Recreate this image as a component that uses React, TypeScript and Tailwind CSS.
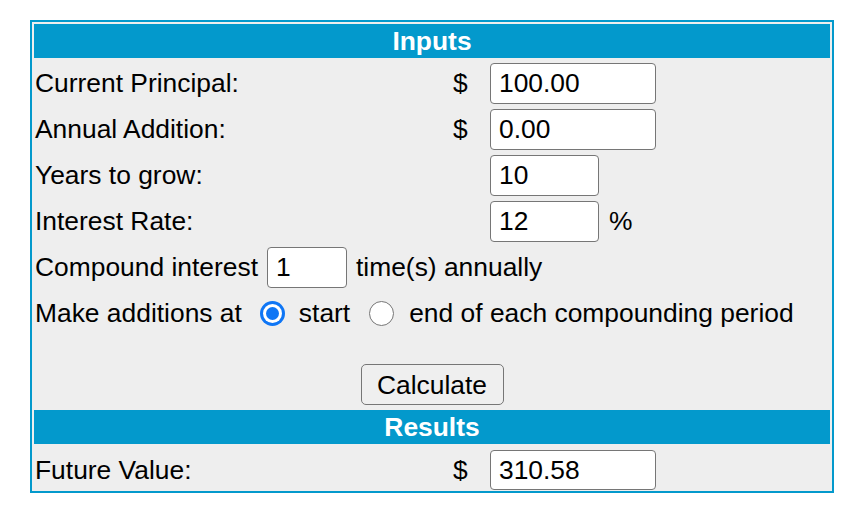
import React from "react";

const BLUE = "bg-[#0399cc]";

function Field({ value, w }: { value: string; w: string }) {
  return (
    <div
      className={`${w} h-[41px] bg-white border-[1.5px] border-[#767676] rounded-[4px] pl-[8px] pt-[1px] flex items-center leading-none text-black`}
    >
      {value}
    </div>
  );
}

function Row({
  label,
  dollar,
  value,
  w,
  pct,
}: {
  label: string;
  dollar?: boolean;
  value: string;
  w: string;
  pct?: boolean;
}) {
  return (
    <div className="flex items-center h-[46px]">
      <span className="w-[419px] pl-[1px] pt-[2px]">{label}</span>
      <span className="w-[14px] pt-[2px]">{dollar ? "$" : ""}</span>
      <div className="ml-[23px]">
        <Field value={value} w={w} />
      </div>
      {pct && <span className="ml-[10px] pt-[2px]">%</span>}
    </div>
  );
}

function Radio({ checked }: { checked: boolean }) {
  return checked ? (
    <span className="w-[25px] h-[25px] rounded-full bg-[#0f76f5] flex items-center justify-center">
      <span className="w-[19px] h-[19px] rounded-full bg-white flex items-center justify-center">
        <span className="w-[13px] h-[13px] rounded-full bg-[#0f76f5]" />
      </span>
    </span>
  ) : (
    <span className="w-[25px] h-[25px] rounded-full bg-white border-[1.5px] border-[#767676]" />
  );
}

export default function App() {
  return (
    <div
      className="w-[864px] h-[512px] bg-white pt-[20px] pl-[30px] text-black text-[26.4px]"
      style={{ fontFamily: '"Liberation Sans", Arial, sans-serif' }}
    >
      <div className="w-[804px] h-[473px] border-2 border-[#0399cc] bg-[#eeeeee] p-[2px] flex flex-col">
        <div
          className={`${BLUE} h-[34px] text-white font-bold text-center leading-[34px]`}
        >
          Inputs
        </div>
        <div className="mt-[2px] flex flex-col">
          <Row label="Current Principal:" dollar value="100.00" w="w-[166px]" />
          <Row label="Annual Addition:" dollar value="0.00" w="w-[166px]" />
          <Row label="Years to grow:" value="10" w="w-[109px]" />
          <Row label="Interest Rate:" value="12" w="w-[109px]" pct />
          <div className="flex items-center h-[46px] pl-[1px]">
            <span className="pt-[2px]">Compound interest</span>
            <div className="ml-[9px]">
              <div className="w-[80px] h-[41px] bg-white border-[1.5px] border-[#767676] rounded-[4px] pl-[8px] pt-[1px] flex items-center leading-none">
                1
              </div>
            </div>
            <span className="ml-[9px] pt-[2px]">time(s) annually</span>
          </div>
          <div className="flex items-center h-[46px] pl-[1px]">
            <span className="pt-[2px]">Make additions at</span>
            <span className="ml-[18px] flex">
              <Radio checked />
            </span>
            <span className="ml-[14px] pt-[2px]">start</span>
            <span className="ml-[19px] flex">
              <Radio checked={false} />
            </span>
            <span className="ml-[15px] pt-[2px]">end of each compounding period</span>
          </div>
        </div>
        <div className="pt-[28px] flex justify-center">
          <div className="w-[143px] h-[41px] bg-[#efefef] border-[1.5px] border-[#767676] rounded-[5px] pt-[1px] flex items-center justify-center leading-none">
            Calculate
          </div>
        </div>
        <div
          className={`${BLUE} mt-[5px] h-[34px] text-white font-bold text-center leading-[34px]`}
        >
          Results
        </div>
        <div className="flex items-center pt-[5px]">
          <span className="w-[419px] pl-[1px] pt-[2px]">Future Value:</span>
          <span className="w-[14px] pt-[2px]">$</span>
          <div className="ml-[23px]">
            <div className="w-[166px] h-[40px] bg-white border-[1.5px] border-[#767676] rounded-[4px] pl-[8px] pt-[1px] flex items-center leading-none">
              310.58
            </div>
          </div>
        </div>
      </div>
    </div>
  );
}
